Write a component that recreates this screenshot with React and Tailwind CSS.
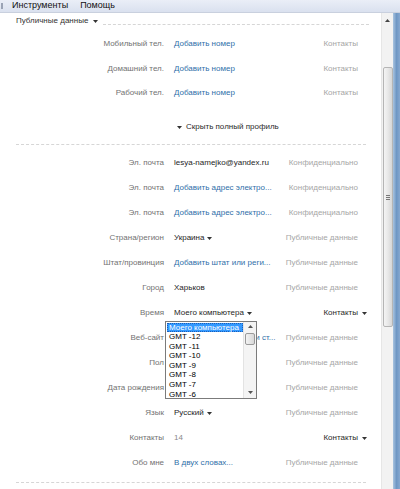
import React from "react";

const F = { fontFamily: '"Liberation Sans", Arial, sans-serif' };

function Arrow({ className = "" }) {
  return (
    <svg width="5" height="3" viewBox="0 0 5 3" className={className}>
      <path d="M0 0h5L2.5 3z" fill="currentColor" />
    </svg>
  );
}

function Row({ label, value, kind = "text", privacy, privDrop, valueDrop, children, h = "h-[25px]" }) {
  const valueCls =
    kind === "link" ? "text-[#2f6fa9]" : kind === "muted" ? "text-[#8a8a8a]" : "text-[#262626]";
  return (
    <div className={`relative flex items-center whitespace-nowrap ${h}`}>
      <div className="w-[164px] shrink-0 text-right text-[#727272]">{label}</div>
      <div className={`ml-[10px] flex w-[110px] shrink-0 items-center gap-[3px] ${valueCls}`}>
        <span>{value}</span>
        {valueDrop && <Arrow className="text-[#333]" />}
      </div>
      {privDrop ? (
        <div className="flex flex-1 items-center justify-end gap-[4px] pr-[14px] text-[#2a2a2a]">
          <span>{privacy}</span>
          <Arrow className="text-[#333]" />
        </div>
      ) : (
        <div className="flex-1 pr-[23px] text-right text-[#a6a6a6]">{privacy}</div>
      )}
      {children}
    </div>
  );
}

function ListBox() {
  const items = ["GMT -12", "GMT -11", "GMT -10", "GMT -9", "GMT -8", "GMT -7", "GMT -6"];
  return (
    <div className="absolute left-[165px] top-[20px] z-10 flex h-[78px] w-[92px] border border-[#7b7b7b] bg-white text-[8px] leading-[9.6px] text-black">
      <div className="flex-1 overflow-hidden whitespace-nowrap pl-px pt-px">
        <div className="border border-dotted border-[#1d5fb8] bg-[#3399ff] pl-px leading-[7.6px] text-white">Моего компьютера</div>
        {items.map((t) => (
          <div key={t} className="pl-[2px]">{t}</div>
        ))}
      </div>
      <div className="relative flex w-[13px] flex-col items-center border-l border-[#e3e3e3] bg-[#f4f4f4]">
        <div className="flex h-[10px] items-center">
          <svg width="5" height="3" viewBox="0 0 5 3"><path d="M0 3h5L2.5 0z" fill="#555" /></svg>
        </div>
        <div className="mt-[1px] h-[12px] w-[10px] rounded-[2px] border border-[#9a9a9a] bg-gradient-to-r from-[#f3f3f3] to-[#d8d8d8]" />
        <div className="flex-1" />
        <div className="flex h-[10px] items-center">
          <svg width="5" height="3" viewBox="0 0 5 3"><path d="M0 0h5L2.5 3z" fill="#555" /></svg>
        </div>
      </div>
    </div>
  );
}

export default function App() {
  return (
    <div style={F} className="flex h-[489px] w-[400px] flex-col overflow-hidden bg-white text-[8px]">
      {/* menu bar */}
      <div className="flex h-[13px] shrink-0 items-center border-b border-[#c9d0de] bg-gradient-to-b from-[#eaeef7] to-[#dae1ef] text-[9px] text-[#111]">
        <div className="ml-[1px] h-[6px] w-[2px] bg-[#9aa3b5]" />
        <span className="ml-[9px]">Инструменты</span>
        <span className="ml-[12px]">Помощь</span>
      </div>
      <div className="flex flex-1">
        {/* content */}
        <div className="flex w-[381px] flex-col">
          <div className="flex h-[16px] items-center pl-[16px] text-[#333]">
            <span>Публичные данные</span>
            <Arrow className="ml-[5px] text-[#333]" />
            <div className="ml-[5px] mt-[6px] h-px w-[266px] border-t border-dashed border-[#d6d6d6]" />
          </div>
          <div className="mt-[3px]" />
          <Row label="Мобильный тел." value="Добавить номер" kind="link" privacy="Контакты" h="h-[24.5px]" />
          <Row label="Домашний тел." value="Добавить номер" kind="link" privacy="Контакты" h="h-[24.5px]" />
          <Row label="Рабочий тел." value="Добавить номер" kind="link" privacy="Контакты" h="h-[24.5px]" />
          <div className="mt-[13.5px] flex h-[16px] items-center pl-[177px] text-[#2a2a2a]">
            <Arrow className="text-[#333]" />
            <span className="ml-[4px]">Скрыть полный профиль</span>
          </div>
          <div className="ml-[16px] mt-[8.5px] h-px w-[350px] border-t border-dashed border-[#d6d6d6]" />
          <div className="mt-[6px]" />
          <Row label="Эл. почта" value="lesya-namejko@yandex.ru" privacy="Конфиденциально" />
          <Row label="Эл. почта" value="Добавить адрес электро..." kind="link" privacy="Конфиденциально" />
          <Row label="Эл. почта" value="Добавить адрес электро..." kind="link" privacy="Конфиденциально" />
          <Row label="Страна/регион" value="Украина" valueDrop privacy="Публичные данные" />
          <Row label="Штат/провинция" value="Добавить штат или реги..." kind="link" privacy="Публичные данные" />
          <Row label="Город" value="Харьков" privacy="Публичные данные" />
          <Row label="Время" value="Моего компьютера" valueDrop privacy="Контакты" privDrop>
            <ListBox />
          </Row>
          <Row label="Веб-сайт" value="Добавить веб-сайт или ст..." kind="link" privacy="Публичные данные" />
          <Row label="Пол" value="" privacy="Публичные данные" />
          <Row label="Дата рождения" value="" privacy="Публичные данные" />
          <Row label="Язык" value="Русский" valueDrop privacy="Публичные данные" />
          <Row label="Контакты" value="14" kind="muted" privacy="Контакты" privDrop />
          <Row label="Обо мне" value="В двух словах..." kind="link" privacy="Публичные данные" />
          <div className="ml-[16px] mt-[6.5px] h-px w-[350px] border-t border-dashed border-[#d6d6d6]" />
        </div>
        {/* scrollbar */}
        <div className="flex w-[12px] flex-col items-center border-l border-[#e6e6e6] bg-[#f2f2f2]">
          <div className="flex h-[14px] items-center">
            <svg width="5" height="3" viewBox="0 0 5 3"><path d="M0 3h5L2.5 0z" fill="#444" /></svg>
          </div>
          <div className="mt-[40px] flex h-[260px] w-[10px] items-center justify-center rounded-[2px] border border-[#b5b5b5] bg-gradient-to-r from-[#f4f4f4] via-[#e8e8e8] to-[#d6d6d6]">
            <div className="flex flex-col gap-[1px]">
              <div className="h-px w-[4px] bg-[#777]" />
              <div className="h-px w-[4px] bg-[#777]" />
              <div className="h-px w-[4px] bg-[#777]" />
            </div>
          </div>
        </div>
        {/* window border */}
        <div className="w-[7px] bg-gradient-to-r from-[#a9c4e0] via-[#6f97c4] to-[#86a8d0]" />
      </div>
    </div>
  );
}
